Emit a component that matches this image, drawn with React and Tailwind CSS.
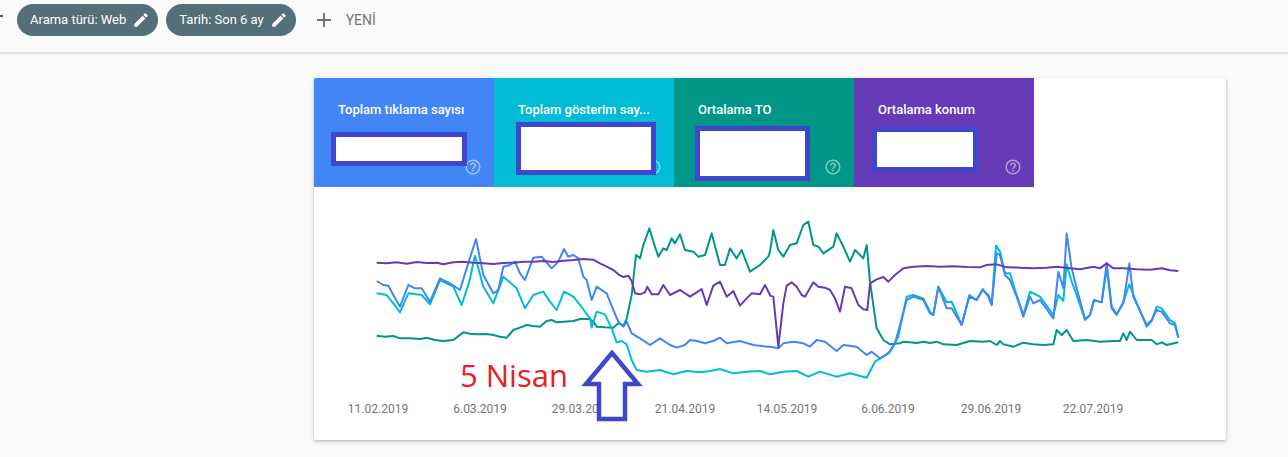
import React from 'react';

// chart points were read off at 3x, so convert back to page pixels
const left = (pts) => pts.map(([a, b]) => [360 + a / 3, 215 + b / 3]);
const right = (pts) => pts.map(([a, b]) => [770 + a / 3, 215 + b / 3]);

const series = [
    {
        color: '#009688',
        pts: [
            ...left([[50,362],[75,365],[100,363],[120,370],[150,370],[180,372],[200,368],[225,375],[250,378],[280,375],[310,352],[330,356],[350,358],[380,357],[400,360],[420,365],[440,368],[460,345],[480,338],[500,330],[520,333],[540,335],[560,318],[575,315],[590,322],[610,320],[640,318],[660,312],[690,312],[700,320],[710,335],[735,337],[760,338],[775,325],[790,332],[800,312],[815,240],[828,120],[840,130],[850,90],[868,40],[880,80],[895,125],[910,100],[920,105],[935,70],[945,85],[960,58],[975,105],[1000,110],[1015,125],[1035,120],[1055,55],[1080,150],[1095,150],[1110,100],[1130,130],[1145,105],[1170,170],[1200,150],[1225,125]]),
            ...right([[0,110],[10,45],[25,105],[40,125],[60,90],[80,85],[100,30],[115,20],[130,90],[145,95],[160,115],[190,95],[200,55],[220,95],[240,140],[255,105],[280,130],[290,90],[300,200],[320,340],[340,375],[360,388],[390,385],[400,380],[420,382],[440,384],[460,380],[480,384],[500,380],[520,388],[560,390],[600,378],[640,380],[660,378],[680,390],[690,378],[700,388],[730,395],[760,383],[790,388],[820,390],[850,388],[860,345],[875,360],[890,345],[910,378],[950,375],[990,380],[1030,378],[1050,378],[1060,355],[1070,375],[1080,350],[1100,375],[1145,375],[1160,388],[1175,382],[1190,390],[1225,382]]),
        ],
    },
    {
        color: '#00bcd4',
        pts: [
            ...left([[50,235],[80,240],[100,265],[120,292],[145,235],[185,240],[210,268],[240,195],[280,215],[305,270],[328,200],[345,122],[370,215],[400,265],[430,185],[470,220],[495,280],[520,240],[550,230],[570,260],[590,285],[612,230],[640,245],[660,270],[690,310],[695,338],[710,290],[735,298],[755,340],[770,382],[785,378],[800,388],[815,435],[830,465],[860,470],[900,465],[940,478],[980,468],[1020,472],[1050,468],[1080,462],[1120,475],[1160,470],[1200,468],[1230,478]]),
            ...right([[0,478],[40,470],[80,468],[115,485],[150,470],[200,485],[240,475],[290,488],[315,440],[340,425],[360,410],[385,365],[410,245],[430,240],[460,250],[480,290],[490,300],[505,215],[530,262],[545,260],[575,330],[598,240],[620,255],[638,222],[655,245],[665,270],[678,92],[690,110],[705,175],[720,175],[735,225],[760,300],[780,230],[800,240],[810,245],[850,300],[865,240],[880,258],[890,148],[905,200],[920,240],[945,315],[960,300],[972,255],[995,262],[1010,160],[1025,280],[1040,300],[1060,260],[1078,208],[1090,240],[1130,335],[1145,318],[1160,275],[1175,280],[1200,315],[1215,325],[1225,368]]),
        ],
    },
    {
        color: '#4285f4',
        pts: [
            ...left([[50,198],[70,210],[85,212],[100,240],[120,275],[145,210],[165,220],[185,220],[210,260],[240,190],[270,205],[300,225],[320,160],[348,72],[370,180],[400,235],[415,225],[430,155],[450,150],[465,140],[480,175],[495,195],[520,128],[545,125],[575,160],[595,140],[612,102],[625,125],[640,120],[655,130],[670,185],[680,195],[695,255],[710,215],[740,235],[760,285],[775,320],[790,335],[800,320],[815,355],[840,370],[870,390],[900,370],[930,390],[950,398],[975,390],[990,375],[1010,378],[1035,385],[1060,378],[1080,368],[1100,385],[1140,378],[1180,390],[1220,395]]),
            ...right([[0,395],[25,400],[40,385],[70,380],[100,385],[120,395],[140,375],[165,380],[200,408],[220,390],[260,395],[290,420],[305,410],[330,430],[355,415],[375,385],[390,330],[410,255],[430,245],[460,255],[480,295],[490,300],[505,215],[530,280],[545,280],[575,330],[598,245],[620,255],[638,225],[655,240],[665,270],[680,115],[690,120],[705,180],[720,195],[740,245],[760,305],[780,245],[790,265],[810,255],[850,310],[865,170],[880,220],[890,55],[905,160],[920,220],[945,312],[960,300],[972,255],[995,262],[1010,145],[1025,275],[1040,298],[1060,265],[1078,145],[1090,245],[1130,330],[1145,315],[1160,285],[1175,290],[1200,325],[1215,330],[1225,368]]),
        ],
    },
    {
        color: '#673ab7',
        pts: [
            ...left([[50,143],[80,145],[110,142],[140,146],[170,141],[200,144],[230,143],[250,148],[280,142],[310,140],[340,143],[370,145],[400,147],[430,144],[460,143],[490,140],[520,140],[550,138],[580,141],[610,137],[640,135],[670,132],[700,134],[720,145],[740,155],[760,165],[775,178],[790,186],[805,182],[815,198],[825,235],[840,238],[855,232],[862,215],[875,238],[895,238],[910,210],[930,240],[960,225],[990,245],[1010,232],[1025,222],[1040,270],[1060,212],[1080,200],[1100,245],[1120,228],[1140,272],[1160,250],[1175,235],[1200,238],[1215,210],[1230,240]]),
            ...right([[0,242],[10,245],[25,395],[40,265],[50,212],[65,202],[80,215],[95,240],[105,245],[130,202],[145,215],[165,218],[180,225],[195,250],[210,290],[225,215],[245,220],[265,270],[280,283],[292,285],[300,205],[320,193],[340,186],[355,200],[375,180],[400,160],[430,155],[470,153],[510,155],[550,154],[590,156],[630,157],[650,150],[680,148],[710,157],[750,158],[790,160],[830,158],[860,155],[900,160],[930,163],[970,155],[990,160],[1010,145],[1030,160],[1060,160],[1100,163],[1140,164],[1175,160],[1200,166],[1225,168]]),
        ],
    },
];

const dates = [
    ['11.02.2019', 378],
    ['6.03.2019', 480],
    ['29.03.2019', 582],
    ['21.04.2019', 685],
    ['14.05.2019', 787],
    ['6.06.2019', 888],
    ['29.06.2019', 991],
    ['22.07.2019', 1093],
];

// redaction boxes sit over the hidden values, offsets are from each tile
const tiles = [
    { title: 'Toplam tıklama sayısı', bg: 'bg-[#4285f4]', box: 'left-[17px] top-[54px] w-[136px] h-[34px]' },
    { title: 'Toplam gösterim say...', bg: 'bg-[#00bcd4]', box: 'left-[22px] top-[44px] w-[140px] h-[53px]' },
    { title: 'Ortalama TO', bg: 'bg-[#009688]', box: 'left-[21px] top-[48px] w-[115px] h-[55px]' },
    { title: 'Ortalama konum', bg: 'bg-[#673ab7]', box: 'left-[18px] top-[49px] w-[106px] h-[45px]' },
];

const Pencil = () => (
    <svg className="w-[18px] h-[18px]" viewBox="0 0 24 24" fill="currentColor">
        <path d="M3 17.25V21h3.75L17.81 9.94l-3.75-3.75L3 17.25zM20.71 7.04c.39-.39.39-1.02 0-1.41l-2.34-2.34c-.39-.39-1.02-.39-1.41 0l-1.83 1.83 3.75 3.75 1.83-1.83z" />
    </svg>
);

const HelpIcon = () => (
    <svg className="w-[18px] h-[18px] text-white/50" viewBox="0 0 24 24" fill="currentColor">
        <path d="M11 18h2v-2h-2v2zm1-16C6.48 2 2 6.480 2 12s4.48 10 10 10 10-4.48 10-10S17.52 2 12 2zm0 18c-4.41 0-8-3.59-8-8s3.59-8 8-8 8 3.59 8 8-3.590 8-8 8zm0-14c-2.21 0-4 1.79-4 4h2c0-1.1.9-2 2-2s2 .9 2 2c0 2-3 1.75-3 5h2c0-2.25 3-2.5 3-5 0-2.21-1.79-4-4-4z" />
    </svg>
);

const Chip = ({ label }) => (
    <button className="h-8 flex items-center gap-[6px] pl-[13px] pr-[8px] rounded-full bg-[#546e7a] text-white text-[13px]">
        <span>{label}</span>
        <Pencil />
    </button>
);

const App = () => {
    return (
        <div className="min-h-screen bg-[#fafafa] font-['Roboto','Liberation_Sans',sans-serif]">
            {/* Filter bar */}
            <div className="relative h-[54px] border-b-2 border-[#e2e2e2] flex items-start pt-1 pl-[17px] gap-2">
                <div className="absolute left-0 top-[15px] w-[3px] h-[2px] bg-[#555]" />
                <Chip label="Arama türü: Web" />
                <Chip label="Tarih: Son 6 ay" />
                <button className="h-8 flex items-center gap-[10px] px-2 text-[#757575] text-[14px]">
                    <svg className="w-6 h-6" viewBox="0 0 24 24" fill="currentColor">
                        <path d="M19 13h-6v6h-2v-6H5v-2h6V5h2v6h6v2z" />
                    </svg>
                    <span>YENİ</span>
                </button>
            </div>

            {/* Performance card */}
            <div className="pt-6 pl-[314px]">
                <div className="w-[912px] bg-white rounded-[2px] overflow-hidden shadow-[0_1px_3px_rgba(0,0,0,0.25),0_2px_6px_rgba(0,0,0,0.08)]">
                    <div className="flex">
                        {tiles.map((t) => (
                            <div key={t.title} className={`relative w-[180px] h-[109px] flex flex-col pt-6 pl-6 pr-[12px] ${t.bg}`}>
                                <div className="text-white text-[13px] font-medium leading-4 truncate">{t.title}</div>
                                <div className="mt-auto mb-[11px] self-end">
                                    <HelpIcon />
                                </div>
                                <div className={`absolute bg-white border-[5px] border-[#3f48cc] ${t.box}`} />
                            </div>
                        ))}
                    </div>

                    <svg className="block" width="912" height="253" viewBox="314 187 912 253">
                        {series.map((s) => (
                            <polyline
                                key={s.color}
                                points={s.pts.map((p) => p.join(',')).join(' ')}
                                fill="none"
                                stroke={s.color}
                                strokeWidth="2"
                                strokeLinejoin="round"
                            />
                        ))}
                        {dates.map(([d, x]) => (
                            <text key={d} x={x} y="413" textAnchor="middle" fontSize="12" fill="#757575" fontFamily="Roboto, sans-serif">
                                {d}
                            </text>
                        ))}

                        {/* annotation */}
                        <text x="460" y="387" fontSize="31" fill="#ed1c24" fontFamily="'Open Sans', sans-serif">
                            5 Nisan
                        </text>
                        <path
                            d="M612 353 L638 384 L625 384 L625 419 L599 419 L599 384 L586 384 Z"
                            fill="white"
                            stroke="#3f48cc"
                            strokeWidth="4.5"
                        />
                    </svg>
                </div>
            </div>
        </div>
    );
};

export default App;
